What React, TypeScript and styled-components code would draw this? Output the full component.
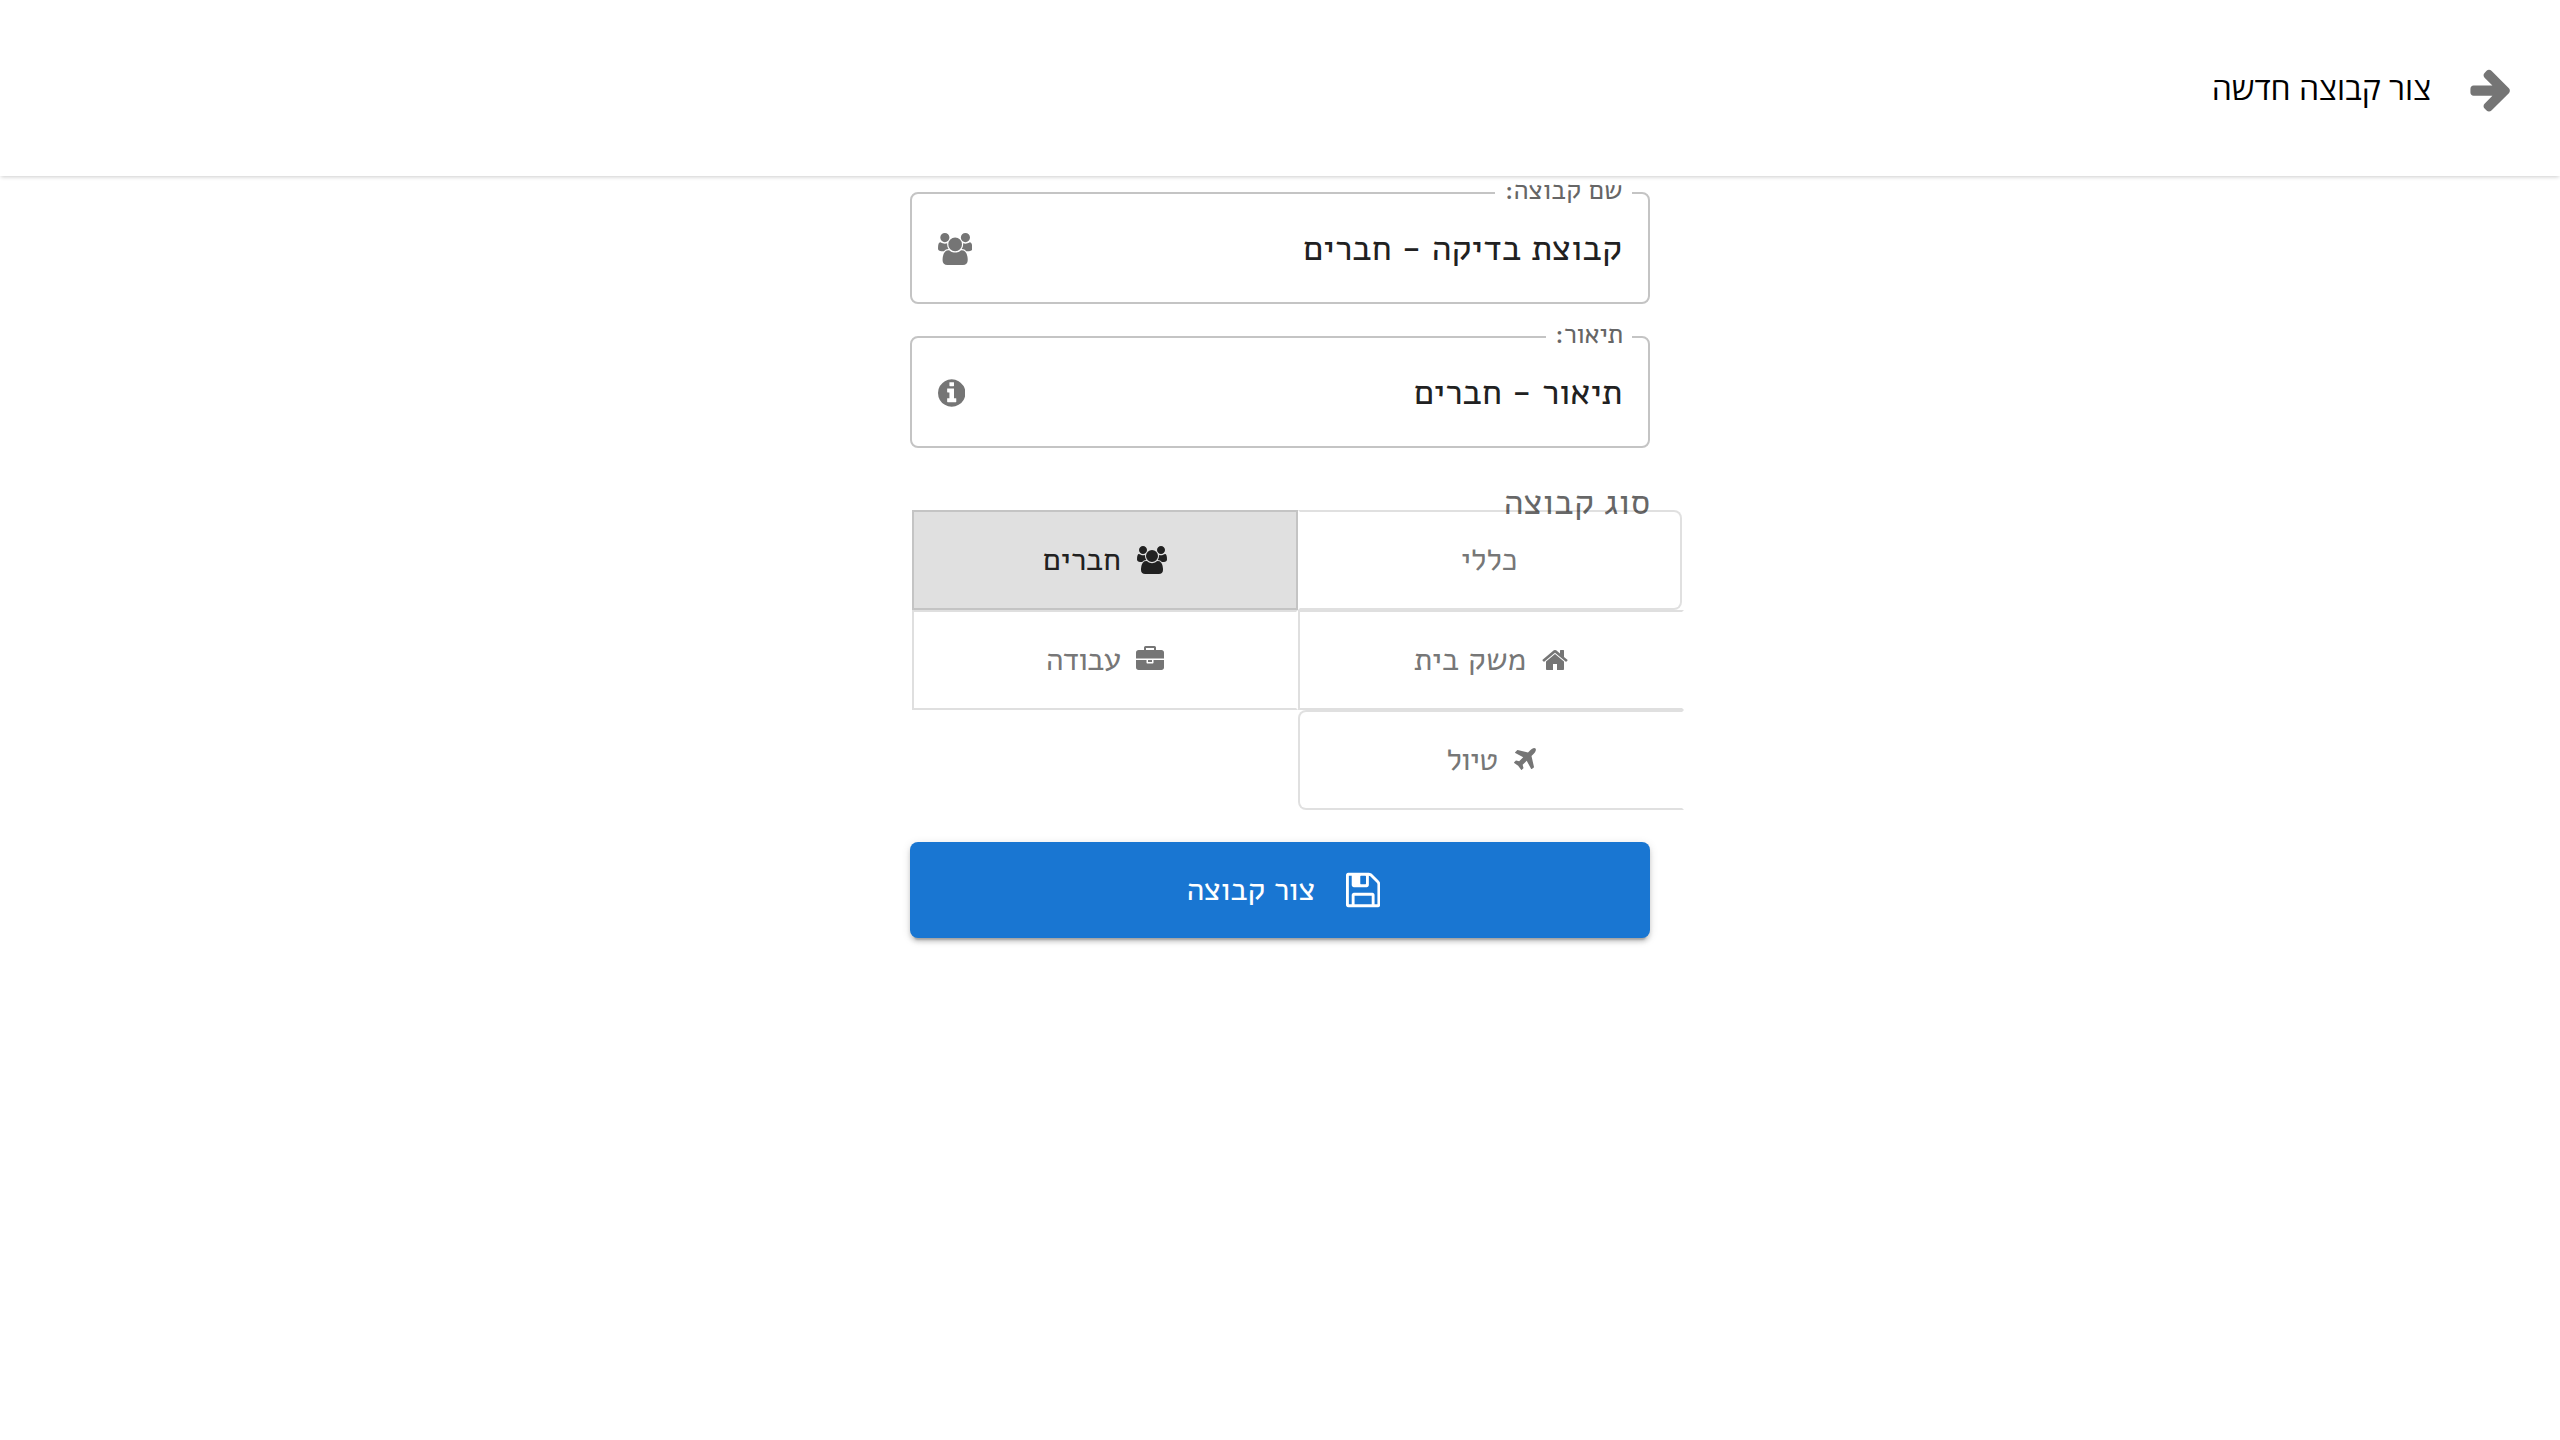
import React from 'react';
import styled, { createGlobalStyle, css } from 'styled-components';

const Global = createGlobalStyle`
  * { box-sizing: border-box; }
  body { margin: 0; background: #fff; font-family: Alef, "Liberation Sans", sans-serif; color: #212121; }
`;

const Page = styled.div`
  min-height: 100vh;
  overflow: hidden;
`;

const Header = styled.header`
  display: flex;
  align-items: center;
  height: 176px;
  padding: 1px 45px 0 0;
  background: #fff;
  box-shadow: 0 2px 4px -1px rgba(0, 0, 0, 0.2);
`;

const Glyph = styled.svg<{ $size: number; $ratio?: number }>`
  flex: none;
  height: ${(p) => p.$size}px;
  width: ${(p) => p.$size * (p.$ratio ?? 1)}px;
  fill: currentColor;
`;

const BackButton = styled.button`
  display: flex;
  padding: 0;
  border: 0;
  background: none;
  color: #757575;
`;

const Title = styled.h1`
  margin: 0 36px 2px 0;
  font: 400 32px/44px "Open Sans", sans-serif;
  color: #000;
`;

const Form = styled.form`
  display: flex;
  flex-direction: column;
  width: 740px;
  margin: 0 auto;
  padding-top: 16px;
`;

const Field = styled.fieldset`
  height: 112px;
  margin: 0 0 32px;
  padding: 0 26px 0 25.5px;
  border: 2px solid #c4c4c4;
  border-radius: 8px;
`;

const Legend = styled.legend<{ $track: number }>`
  height: 2px;
  margin-right: -10px;
  padding: 0 9.5px;
  font-size: 27px;
  letter-spacing: ${(p) => p.$track}px;
  color: #666;
  white-space: nowrap;
`;

const LegendText = styled.span`
  display: block;
  margin-top: -2px;
  line-height: 2px;
`;

const FieldRow = styled.div`
  display: flex;
  align-items: center;
  justify-content: space-between;
  height: 108px;
  padding-top: 1px;
`;

const Value = styled.span<{ $track: number }>`
  font-size: 36px;
  line-height: 40px;
  letter-spacing: ${(p) => p.$track}px;
`;

const FieldIcon = styled.span`
  display: flex;
  color: #757575;
`;

const TypeLabel = styled.div`
  height: 30px;
  line-height: 46px;
  font-size: 36px;
  letter-spacing: -0.1px;
  color: rgba(0, 0, 0, 0.6);
`;

const Types = styled.div`
  display: grid;
  grid-template-columns: 386px 386px;
  grid-auto-rows: 100px;
  margin: 0 -34px 32px 2px;
`;

const edges = {
  first: css`
    border-left-color: transparent;
    border-radius: 0 8px 8px 0;
    margin-right: 2px;
    padding-right: 2px;
  `,
  selected: css`
    background-color: #e0e0e0;
    color: #212121;
  `,
  middle: css`
    border-right-color: transparent;
  `,
  last: css`
    border-right-color: transparent;
    border-radius: 8px 0 0 8px;
  `,
};

const TypeButton = styled.button<{ $edge: keyof typeof edges; $track: number }>`
  display: flex;
  align-items: center;
  justify-content: center;
  gap: 16.5px;
  padding: 0;
  border: 2px solid rgba(0, 0, 0, 0.12);
  background: none;
  color: rgba(0, 0, 0, 0.54);
  font: 400 32px/40px Alef, "Liberation Sans", sans-serif;
  letter-spacing: ${(p) => p.$track}px;
  ${(p) => edges[p.$edge]}
`;

const Submit = styled.button`
  display: flex;
  align-items: center;
  justify-content: center;
  gap: 31px;
  height: 96px;
  padding: 0 0 0 7px;
  border: 0;
  border-radius: 8px;
  background: #1976d2;
  color: #fff;
  font: 400 32px/40px Alef, "Liberation Sans", sans-serif;
  letter-spacing: -0.5px;
  box-shadow: 0 6px 2px -4px rgba(0, 0, 0, 0.2), 0 4px 4px rgba(0, 0, 0, 0.14), 0 2px 10px rgba(0, 0, 0, 0.12);
`;

const ArrowIcon = () => (
  <Glyph $size={48} viewBox="0 0 1792 1792">
    <path d="M1600 960q0 54-37 91l-651 651q-39 37-91 37-51 0-90-37l-75-75q-38-38-38-91t38-91l293-293H245q-52 0-84.500-37.500T128 1024V896q0-53 32.500-90.500T245 768h704L656 474q-38-36-38-90t38-90l75-75q38-38 90-38 53 0 91 38l651 651q37 35 37 90z" />
  </Glyph>
);
const GroupIcon = ({ size }: { size: number }) => (
  <Glyph $size={size} $ratio={1920 / 1792} viewBox="0 0 1920 1792">
    <path d="M593 896q-162 5-265 128H194q-82 0-138-40.500T0 865q0-353 124-353 6 0 43.500 21t97.500 42.500T384 597q67 0 133-23-5 37-5 66 0 139 81 256zm1071 637q0 120-73 189.500t-194 69.500H523q-121 0-194-69.500T256 1533q0-53 3.500-103.500t14-109T300 1212t43-97.500 62-81 85.500-53.500T602 960q10 0 43 21.500t73 48 107 48 135 21.500 135-21.500 107-48 73-48 43-21.500q61 0 111.500 20t85.500 53.500 62 81 43 97.500 26.500 108.500 14 109 3.500 103.500zM640 256q0 106-75 181t-181 75-181-75-75-181 75-181T384 0t181 75 75 181zm704 384q0 159-112.500 271.500T960 1024 688.500 911.500 576 640t112.500-271.500T960 256t271.500 112.500T1344 640zm576 225q0 78-56 118.500t-138 40.500h-134q-103-123-265-128 81-117 81-256 0-29-5-66 66 23 133 23 59 0 119-21.500t97.500-42.500 43.500-21q124 0 124 353zm-128-609q0 106-75 181t-181 75-181-75-75-181 75-181 181-75 181 75 75 181z" />
  </Glyph>
);
const InfoIcon = () => (
  <Glyph $size={32} $ratio={1536 / 1792} viewBox="128 0 1536 1792">
    <path d="M1152 1376v-160q0-14-9-23t-23-9h-96V672q0-14-9-23t-23-9H672q-14 0-23 9t-9 23v160q0 14 9 23t23 9h96v320h-96q-14 0-23 9t-9 23v160q0 14 9 23t23 9h448q14 0 23-9t9-23zm-128-896V320q0-14-9-23t-23-9H800q-14 0-23 9t-9 23v160q0 14 9 23t23 9h192q14 0 23-9t9-23zm640 416q0 209-103 385.500T1281.500 1561 896 1664t-385.500-103T231 1281.500 128 896t103-385.500T510.500 231 896 128t385.500 103T1561 510.500 1664 896z" />
  </Glyph>
);
const HomeIcon = () => (
  <Glyph $size={28} $ratio={1664 / 1792} viewBox="0 0 1664 1792">
    <path d="M1408 992v480q0 26-19 45t-45 19H960v-384H704v384H320q-26 0-45-19t-19-45V992q0-1 .5-3t.5-3l575-474 575 474q1 2 1 6zm223-69l-62 74q-8 9-21 11h-3q-13 0-21-7L832 424 140 1001q-12 8-24 7-13-2-21-11l-62-74q-8-10-7-23.500T37 878L756 279q32-26 76-26t76 26l244 204V288q0-14 9-23t23-9h192q14 0 23 9t9 23v408l219 182q10 8 11 21.500t-7 23.500z" />
  </Glyph>
);
const WorkIcon = () => (
  <Glyph $size={28} viewBox="0 0 1792 1792">
    <path d="M640 256h512V128H640v128zm1152 640v480q0 66-47 113t-113 47H160q-66 0-113-47T0 1376V896h672v160q0 26 19 45t45 19h320q26 0 45-19t19-45V896h672zm-768 0v128H768V896h256zm768-480v384H0V416q0-66 47-113t113-47h352V96q0-40 28-68t68-28h576q40 0 68 28t28 68v160h352q66 0 113 47t47 113z" />
  </Glyph>
);
const PlaneIcon = () => (
  <Glyph $size={28} $ratio={1408 / 1792} viewBox="192 0 1408 1792">
    <path d="M1568 160q44 52 12 148t-108 172l-161 161 160 696q5 19-12 33l-128 96q-7 6-19 6-4 0-7-1-15-3-21-16L1005 947l-259 259 53 194q5 17-8 31l-96 96q-9 9-23 9h-2q-15-2-24-13l-189-252-252-189q-11-7-13-23-1-13 9-25l96-97q9-9 23-9 6 0 8 1l194 53 259-259-508-279q-14-8-17-24-2-16 9-27l128-128q14-13 30-8l665 159 160-160q76-76 172-108t148 12z" />
  </Glyph>
);
const SaveIcon = () => (
  <Glyph $size={40} $ratio={1536 / 1792} viewBox="128 0 1536 1792">
    <path d="M512 1536h768v-384H512v384zm896 0h128V640q0-14-10-38.500t-20-34.500l-281-281q-10-10-34-20t-39-10v416q0 40-28 68t-68 28H480q-40 0-68-28t-28-68V256H256v1280h128v-416q0-40 28-68t68-28h832q40 0 68 28t28 68v416zM1024 608V288q0-13-9.500-22.500T992 256H800q-13 0-22.500 9.500T768 288v320q0 13 9.500 22.500T800 640h192q13 0 22.500-9.500t9.500-22.500zm640 32v928q0 40-28 68t-68 28H224q-40 0-68-28t-28-68V224q0-40 28-68t68-28h928q40 0 88 20t76 48l280 280q28 28 48 76t20 88z" />
  </Glyph>
);

export default function App() {
  return (
    <Page dir="rtl">
      <Global />
      <Header>
        <BackButton><ArrowIcon /></BackButton>
        <Title>צור קבוצה חדשה</Title>
      </Header>
      <Form>
        <Field>
          <Legend $track={-0.1}><LegendText>שם קבוצה:</LegendText></Legend>
          <FieldRow>
            <Value $track={-0.2}>קבוצת בדיקה - חברים</Value>
            <FieldIcon><GroupIcon size={32} /></FieldIcon>
          </FieldRow>
        </Field>
        <Field>
          <Legend $track={-0.45}><LegendText>תיאור:</LegendText></Legend>
          <FieldRow>
            <Value $track={-0.28}>תיאור - חברים</Value>
            <FieldIcon><InfoIcon /></FieldIcon>
          </FieldRow>
        </Field>
        <TypeLabel>סוג קבוצה</TypeLabel>
        <Types>
          <TypeButton type="button" $edge="first" $track={-0.3}>כללי</TypeButton>
          <TypeButton type="button" $edge="selected" $track={-0.3}><GroupIcon size={28} />חברים</TypeButton>
          <TypeButton type="button" $edge="middle" $track={-0.35}><HomeIcon />משק בית</TypeButton>
          <TypeButton type="button" $edge="middle" $track={-1.15}><WorkIcon />עבודה</TypeButton>
          <TypeButton type="button" $edge="last" $track={-1.2}><PlaneIcon />טיול</TypeButton>
        </Types>
        <Submit type="button"><SaveIcon />צור קבוצה</Submit>
      </Form>
    </Page>
  );
}
